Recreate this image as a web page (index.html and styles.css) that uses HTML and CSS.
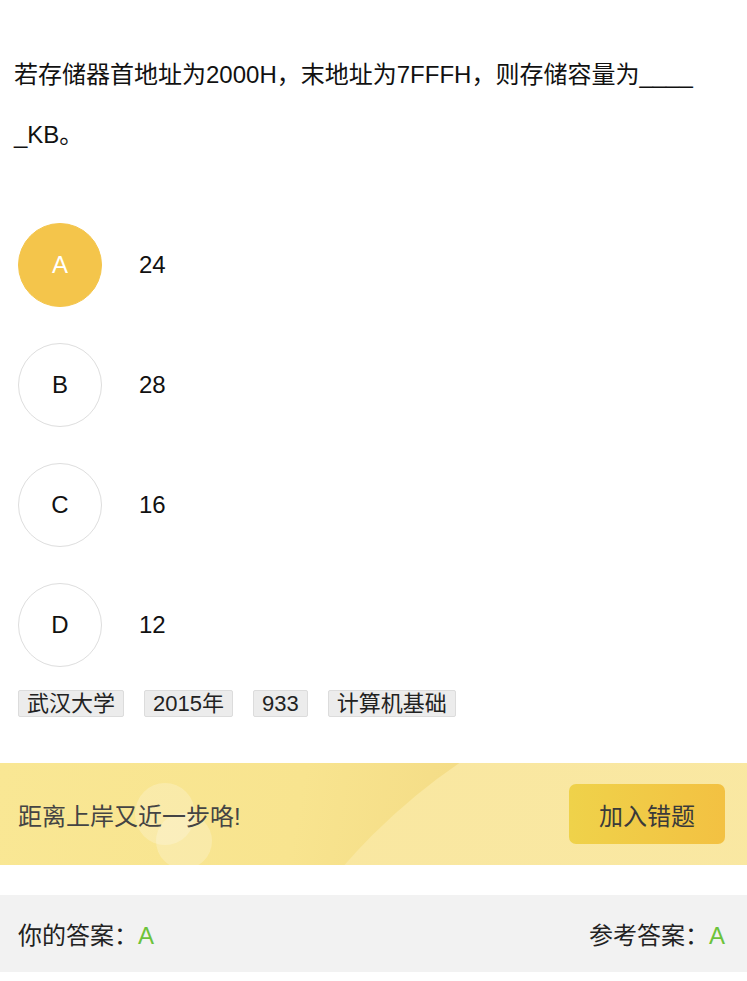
FILE: index.html
```html
<!DOCTYPE html>
<html lang="zh">
<head>
<meta charset="utf-8">
<link rel="stylesheet" href="styles.css">
</head>
<body>
<div class="page">
  <div class="question">若存储器首地址为2000H，末地址为7FFFH，则存储容量为____<br>_KB。</div>
  <div class="options">
    <div class="option"><div class="circle selected">A</div><div class="opt-text">24</div></div>
    <div class="option"><div class="circle">B</div><div class="opt-text">28</div></div>
    <div class="option"><div class="circle">C</div><div class="opt-text">16</div></div>
    <div class="option"><div class="circle">D</div><div class="opt-text">12</div></div>
  </div>
  <div class="tags">
    <span class="tag">武汉大学</span>
    <span class="tag">2015年</span>
    <span class="tag">933</span>
    <span class="tag">计算机基础</span>
  </div>
  <div class="banner">
    <span class="arc"></span>
    <span class="bubble b1"></span>
    <span class="bubble b2"></span>
    <div class="banner-text">距离上岸又近一步咯!</div>
    <div class="btn">加入错题</div>
  </div>
  <div class="answers">
    <div class="ans">你的答案：<span class="green">A</span></div>
    <div class="ans">参考答案：<span class="green">A</span></div>
  </div>
</div>
</body>
</html>
```

FILE: styles.css
```css
html, body {
  margin: 0;
  padding: 0;
  background: #fff;
}
body {
  font-family: "Liberation Sans", "Noto Sans CJK SC", sans-serif;
  color: #000;
}
.page {
  width: 747px;
}
.question {
  padding: 45px 14px 0;
  font-size: 24px;
  line-height: 60px;
  color: #111;
}
.options {
  margin-top: 40px;
}
.option {
  height: 120px;
  display: flex;
  align-items: center;
  padding-left: 18px;
}
.circle {
  width: 82px;
  height: 82px;
  border: 1px solid #dedede;
  border-radius: 50%;
  display: flex;
  align-items: center;
  justify-content: center;
  font-size: 24px;
  color: #111;
}
.circle.selected {
  background: #f4c54b;
  border-color: #f4c54b;
  color: #fff;
}
.opt-text {
  margin-left: 37px;
  font-size: 24px;
  color: #111;
}
.tags {
  margin-top: 5px;
  padding-left: 18px;
  display: flex;
  gap: 20px;
}
.tag {
  font-size: 22px;
  line-height: 25px;
  padding: 0 8px;
  background: #ececec;
  border: 1px solid #dcdcdc;
  border-radius: 2px;
  color: #222;
}
.banner {
  position: relative;
  overflow: hidden;
  margin-top: 46px;
  height: 102px;
  background: linear-gradient(100deg, #f9e794 0%, #f8e48f 40%, #f4dc86 62%, #f4dc86 100%);
  display: flex;
  align-items: center;
  justify-content: space-between;
  padding: 0 22px 0 18px;
}
.arc {
  position: absolute;
  left: 197px;
  top: -104px;
  width: 1200px;
  height: 1200px;
  border-radius: 50%;
  background: linear-gradient(135deg, #f9e7a0, #fae9a6);
}
.bubble {
  position: absolute;
  border-radius: 50%;
  background: rgba(255, 255, 255, 0.22);
}
.b1 {
  left: 135px;
  top: 20px;
  width: 60px;
  height: 62px;
}
.b2 {
  left: 156px;
  top: 50px;
  width: 56px;
  height: 56px;
}
.banner-text {
  position: relative;
  font-size: 24px;
  color: #444;
}
.btn {
  position: relative;
  width: 156px;
  height: 60px;
  border-radius: 7px;
  background: linear-gradient(90deg, #efd24a, #f3c142);
  display: flex;
  align-items: center;
  justify-content: center;
  font-size: 24px;
  color: #3a3a3a;
}
.answers {
  margin-top: 30px;
  height: 77px;
  background: #f2f2f2;
  display: flex;
  align-items: center;
  justify-content: space-between;
  padding: 0 22px 0 18px;
}
.ans {
  font-size: 24px;
  color: #222;
}
.green {
  color: #6cc33b;
}
```
